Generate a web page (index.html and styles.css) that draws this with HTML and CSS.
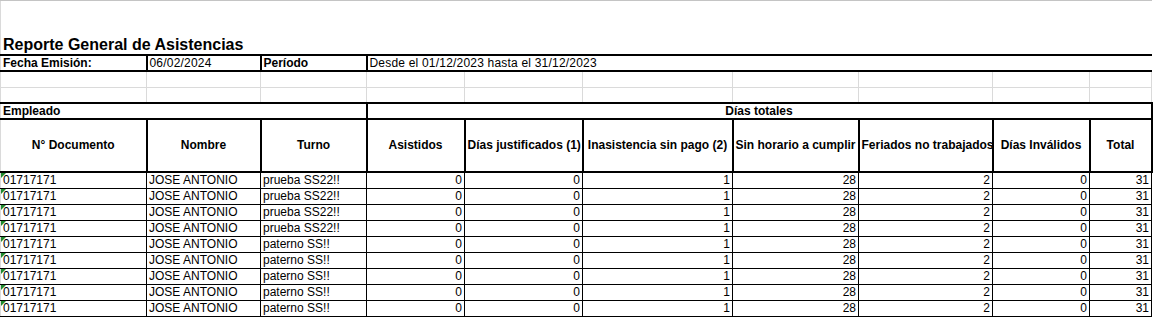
FILE: index.html
```html
<!DOCTYPE html>
<html lang="es">
<head>
<meta charset="utf-8">
<title>Reporte General de Asistencias</title>
<link rel="stylesheet" href="styles.css">
</head>
<body>
<table class="sheet">
  <colgroup>
    <col class="c1"><col class="c2"><col class="c3"><col class="c4"><col class="c5">
    <col class="c6"><col class="c7"><col class="c8"><col class="c9"><col class="c10">
  </colgroup>
  <tr class="r-top"><td></td><td></td><td></td><td></td><td></td><td></td><td></td><td></td><td></td><td></td></tr>
  <tr class="r-title"><td colspan="10" class="title">Reporte General de Asistencias</td></tr>
  <tr class="r-info">
    <td class="b">Fecha Emisión:</td>
    <td class="wide">06/02/2024</td>
    <td class="b">Período</td>
    <td colspan="7" class="wide">Desde el 01/12/2023 hasta el 31/12/2023</td>
  </tr>
  <tr class="r-empty first"><td></td><td></td><td></td><td></td><td></td><td></td><td></td><td></td><td></td><td></td></tr>
  <tr class="r-empty"><td></td><td></td><td></td><td></td><td></td><td></td><td></td><td></td><td></td><td></td></tr>
  <tr class="r-group">
    <td colspan="3" class="b">Empleado</td>
    <td colspan="7" class="b center">Días totales</td>
  </tr>
  <tr class="r-head">
    <th>N° Documento</th>
    <th>Nombre</th>
    <th>Turno</th>
    <th>Asistidos</th>
    <th>Días justificados (1)</th>
    <th>Inasistencia sin pago (2)</th>
    <th>Sin horario a cumplir</th>
    <th>Feriados no trabajados</th>
    <th>Días Inválidos</th>
    <th>Total</th>
  </tr>
  <tr class="r-data"><td class="doc">01717171</td><td>JOSE ANTONIO</td><td>prueba SS22!!</td><td class="n">0</td><td class="n">0</td><td class="n">1</td><td class="n">28</td><td class="n">2</td><td class="n">0</td><td class="n">31</td></tr>
  <tr class="r-data"><td class="doc">01717171</td><td>JOSE ANTONIO</td><td>prueba SS22!!</td><td class="n">0</td><td class="n">0</td><td class="n">1</td><td class="n">28</td><td class="n">2</td><td class="n">0</td><td class="n">31</td></tr>
  <tr class="r-data"><td class="doc">01717171</td><td>JOSE ANTONIO</td><td>prueba SS22!!</td><td class="n">0</td><td class="n">0</td><td class="n">1</td><td class="n">28</td><td class="n">2</td><td class="n">0</td><td class="n">31</td></tr>
  <tr class="r-data"><td class="doc">01717171</td><td>JOSE ANTONIO</td><td>prueba SS22!!</td><td class="n">0</td><td class="n">0</td><td class="n">1</td><td class="n">28</td><td class="n">2</td><td class="n">0</td><td class="n">31</td></tr>
  <tr class="r-data"><td class="doc">01717171</td><td>JOSE ANTONIO</td><td>paterno SS!!</td><td class="n">0</td><td class="n">0</td><td class="n">1</td><td class="n">28</td><td class="n">2</td><td class="n">0</td><td class="n">31</td></tr>
  <tr class="r-data"><td class="doc">01717171</td><td>JOSE ANTONIO</td><td>paterno SS!!</td><td class="n">0</td><td class="n">0</td><td class="n">1</td><td class="n">28</td><td class="n">2</td><td class="n">0</td><td class="n">31</td></tr>
  <tr class="r-data"><td class="doc">01717171</td><td>JOSE ANTONIO</td><td>paterno SS!!</td><td class="n">0</td><td class="n">0</td><td class="n">1</td><td class="n">28</td><td class="n">2</td><td class="n">0</td><td class="n">31</td></tr>
  <tr class="r-data"><td class="doc">01717171</td><td>JOSE ANTONIO</td><td>paterno SS!!</td><td class="n">0</td><td class="n">0</td><td class="n">1</td><td class="n">28</td><td class="n">2</td><td class="n">0</td><td class="n">31</td></tr>
  <tr class="r-data"><td class="doc">01717171</td><td>JOSE ANTONIO</td><td>paterno SS!!</td><td class="n">0</td><td class="n">0</td><td class="n">1</td><td class="n">28</td><td class="n">2</td><td class="n">0</td><td class="n">31</td></tr>
</table>
</body>
</html>
```
FILE: styles.css
```css
html, body {
  margin: 0;
  padding: 0;
  background: #ffffff;
}

body {
  font-family: "Liberation Sans", Arial, sans-serif;
  font-size: 12px;
  color: #000000;
  overflow: hidden;
}

.sheet {
  border-collapse: collapse;
  table-layout: fixed;
  width: 1152px;
}

.c1 { width: 146px; }
.c2 { width: 114px; }
.c3 { width: 106px; }
.c4 { width: 98px; }
.c5 { width: 118px; }
.c6 { width: 150px; }
.c7 { width: 126px; }
.c8 { width: 134px; }
.c9 { width: 97px; }
.c10 { width: 62px; }

.sheet td,
.sheet th {
  padding: 0 2px;
  white-space: nowrap;
  overflow: hidden;
  line-height: 14px;
  text-align: left;
  vertical-align: bottom;
  border: 1px solid #dadada;
}

.sheet .b { font-weight: bold; }
.sheet .center { text-align: center; }
.sheet .wide { letter-spacing: 0.2px; }

/* top partial row */
.r-top td {
  height: 0;
  padding: 0;
  border-top: none;
  border-bottom: 1px solid #c4c4c4;
}

/* title row */
.r-title td {
  height: 52px;
  border-bottom: 2px solid #000;
  border-left-color: #dadada;
  border-right: none;
}
.sheet .title {
  font-size: 16px;
  font-weight: bold;
  line-height: 16px;
  padding-bottom: 1px;
}

/* info row */
.r-info td {
  height: 14px;
  border-top: 2px solid #000;
  border-bottom: 2px solid #000;
  border-left: 2px solid #000;
}
.r-info td:first-child { border-left: 1px solid #dadada; }
.r-info td:last-child { border-right: none; }

.r-empty td { height: 14px; }
.r-empty.first td { height: 15px; }

/* group row */
.r-group td {
  height: 14px;
  border-top: 2px solid #000;
  border-bottom: 2px solid #000;
  border-right: 2px solid #000;
}
.r-group td:first-child { border-left: 1px solid #dadada; }

/* header row */
.r-head th {
  height: 51px;
  font-weight: bold;
  text-align: center;
  vertical-align: middle;
  line-height: 15px;
  border: 2px solid #000;
}
.r-head th:first-child { border-left: 1px solid #dadada; }

/* data rows */
.r-data td {
  height: 15px;
  line-height: 15px;
  border: 1px solid #000;
}
.r-data td:first-child { border-left: 1px solid #dadada; }
.sheet .r-data td.n { text-align: right; }
.r-data td.doc { position: relative; }
.r-data td.doc::before {
  content: "";
  position: absolute;
  left: 0;
  top: 0;
  border-top: 5px solid #1f8a2e;
  border-right: 5px solid transparent;
}
```
